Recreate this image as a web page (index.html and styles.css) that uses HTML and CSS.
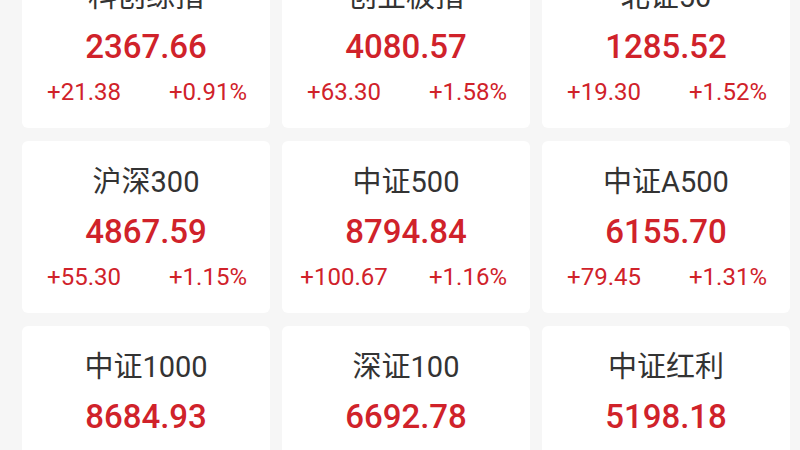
FILE: index.html
```html
<!DOCTYPE html>
<html>
<head>
    <title>指数行情</title>
    <link rel="stylesheet" href="styles.css">
</head>
<body>
    <div class="index-grid">
        <div class="index-card">
            <div class="index-name">科创综指</div>
            <div class="index-value">2367.66</div>
            <div class="index-change"><span>+21.38</span><span>+0.91%</span></div>
        </div>
        <div class="index-card">
            <div class="index-name">创业板指</div>
            <div class="index-value">4080.57</div>
            <div class="index-change"><span>+63.30</span><span>+1.58%</span></div>
        </div>
        <div class="index-card">
            <div class="index-name">北证50</div>
            <div class="index-value">1285.52</div>
            <div class="index-change"><span>+19.30</span><span>+1.52%</span></div>
        </div>
        <div class="index-card">
            <div class="index-name">沪深300</div>
            <div class="index-value">4867.59</div>
            <div class="index-change"><span>+55.30</span><span>+1.15%</span></div>
        </div>
        <div class="index-card">
            <div class="index-name">中证500</div>
            <div class="index-value">8794.84</div>
            <div class="index-change"><span>+100.67</span><span>+1.16%</span></div>
        </div>
        <div class="index-card">
            <div class="index-name">中证A500</div>
            <div class="index-value">6155.70</div>
            <div class="index-change"><span>+79.45</span><span>+1.31%</span></div>
        </div>
        <div class="index-card">
            <div class="index-name">中证1000</div>
            <div class="index-value">8684.93</div>
            <div class="index-change"><span>+91.52</span><span>+1.07%</span></div>
        </div>
        <div class="index-card">
            <div class="index-name">深证100</div>
            <div class="index-value">6692.78</div>
            <div class="index-change"><span>+73.81</span><span>+1.12%</span></div>
        </div>
        <div class="index-card">
            <div class="index-name">中证红利</div>
            <div class="index-value">5198.18</div>
            <div class="index-change"><span>+20.46</span><span>+0.40%</span></div>
        </div>
    </div>
</body>
</html>
```

FILE: styles.css
```css
body {
    font-family: Roboto, "Noto Sans CJK SC", sans-serif;
    background-color: #f6f6f6;
    margin: 0;
    padding: 0;
    overflow: hidden;
}
.index-grid {
    display: grid;
    grid-template-columns: repeat(3, 248px);
    column-gap: 12px;
    row-gap: 13px;
    padding: 0 10px 0 22px;
    margin-top: -44px;
}
.index-card {
    background: white;
    border-radius: 6px;
    height: 172px;
    box-sizing: border-box;
    padding: 21px 0;
    text-align: center;
}
.index-name {
    font-size: 29px;
    line-height: 40px;
    color: #333;
}
.index-value {
    margin-top: 10px;
    font-size: 33px;
    font-weight: 500;
    line-height: 40px;
    color: #d0222a;
}
.index-change {
    display: flex;
    margin-top: 10px;
    font-size: 24px;
    line-height: 30px;
    color: #d0222a;
}
.index-change span {
    flex: 1;
}
```
